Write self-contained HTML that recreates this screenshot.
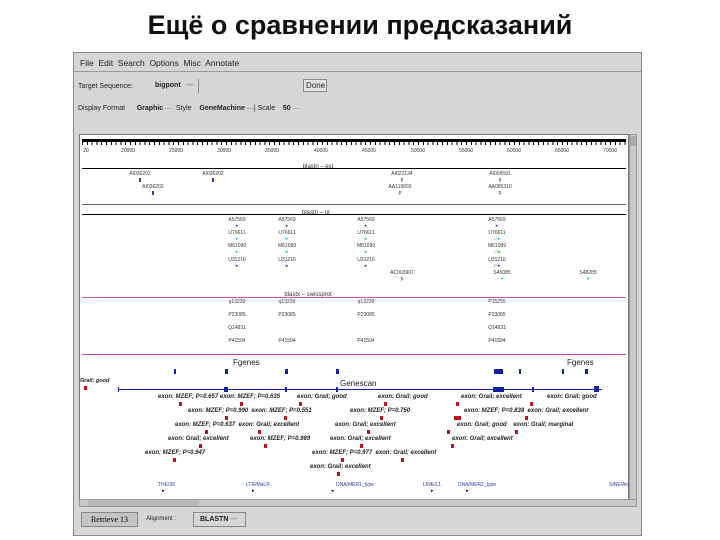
<!DOCTYPE html>
<html><head><meta charset="utf-8"><style>
*{margin:0;padding:0;box-sizing:border-box}
body{width:720px;height:540px;background:#fff;position:relative;overflow:hidden;font-family:"Liberation Sans",sans-serif}
.a{position:absolute;white-space:nowrap}
.t{position:absolute;white-space:nowrap;font-size:5px;color:#333;transform:translateX(-50%)}
.e{position:absolute;white-space:nowrap;font-size:6px;font-style:italic;font-weight:bold;color:#222}
.m{position:absolute;width:3px;height:4px;background:#c01020}
.b{position:absolute;width:2px;height:4px}
.l{position:absolute;height:1px}
.g{position:absolute;background:#1020a0}
.ui{font-size:7px;color:#222}
</style></head><body>
<div class="a" style="left:0;width:720px;top:10px;text-align:center;font-size:27px;font-weight:bold;color:#111">Ещё о сравнении предсказаний</div>

<div class="a" style="left:73px;top:52px;width:569px;height:484px;background:#d6d6d6;border:1px solid #888"></div>
<div class="a ui" style="left:74px;top:53px;width:567px;height:19px;border-bottom:1px solid #999;font-size:8.5px;padding:5px 0 0 6px">File&nbsp; Edit&nbsp; Search&nbsp; Options&nbsp; Misc&nbsp; Annotate</div>
<div class="a ui" style="left:78px;top:83px">Target Sequence:</div>
<div class="a ui" style="left:138px;top:79px;width:61px;height:14px;border-right:1px solid #888;font-weight:bold;padding:3px 0 0 17px">bigpont <span style="color:#888">&nbsp;&nbsp;—</span></div>
<div class="a ui" style="left:303px;top:79px;width:24px;height:13px;border:1px solid #888;background:#e4e4e4;font-size:8px;padding:1px 0 0 2px">Done</div>
<div class="a ui" style="left:78px;top:105px">Display Format&nbsp;&nbsp;&nbsp;&nbsp;&nbsp; <b>Graphic</b> <span style="color:#888">—</span>&nbsp; Style&nbsp;&nbsp;&nbsp; <b>GeneMachine</b> <span style="color:#888">—</span>| Scale&nbsp;&nbsp;&nbsp; <b>50</b> <span style="color:#888">—</span></div>

<div class="a" style="left:79px;top:134px;width:550px;height:366px;background:#fff;border:1px solid #777"></div>
<div class="a" style="left:629px;top:134px;width:8px;height:366px;background:#c8c8c8;border:1px solid #999"></div>
<div class="a" style="left:630px;top:136px;width:6px;height:10px;background:#aaa"></div>
<div class="a" style="left:79px;top:499px;width:558px;height:8px;background:#c8c8c8;border:1px solid #999"></div>
<div class="a" style="left:88px;top:500px;width:110px;height:6px;background:#b8b8b8"></div>

<div class="a" style="left:82px;top:139px;width:544px;height:3px;background:#000"></div>
<div class="a" style="left:82px;top:142px;width:544px;height:3px;background:repeating-linear-gradient(90deg,#000 0 1px,transparent 1px 4.8px)"></div>
<div class="t" style="left:86px;top:148px">20</div><div class="t" style="left:128px;top:148px">20000</div><div class="t" style="left:176px;top:148px">25000</div><div class="t" style="left:224px;top:148px">30000</div><div class="t" style="left:272px;top:148px">35000</div><div class="t" style="left:321px;top:148px">40000</div><div class="t" style="left:369px;top:148px">45000</div><div class="t" style="left:418px;top:148px">50000</div><div class="t" style="left:466px;top:148px">55000</div><div class="t" style="left:514px;top:148px">60000</div><div class="t" style="left:562px;top:148px">65000</div><div class="t" style="left:610px;top:148px">70000</div>

<div class="l" style="left:82px;top:168px;width:544px;background:#000"></div>
<div class="t" style="left:318px;top:164px;font-size:6px">blastn – est</div>
<div class="t" style="left:140px;top:171px">AI036202</div><div class="b" style="left:139px;top:178px;background:#3040a0"></div>
<div class="t" style="left:213px;top:171px">AI036202</div><div class="b" style="left:212px;top:178px;background:#3040a0"></div>
<div class="t" style="left:153px;top:184px">AI036202</div><div class="b" style="left:152px;top:191px;background:#3040a0"></div>
<div class="t" style="left:402px;top:171px">AI022134</div><div class="t" style="left:402px;top:177px">p</div>
<div class="t" style="left:400px;top:184px">AA119602</div><div class="t" style="left:400px;top:190px">p</div>
<div class="t" style="left:500px;top:171px">AI006591</div><div class="t" style="left:500px;top:177px">p</div>
<div class="t" style="left:500px;top:184px">AA065310</div><div class="t" style="left:500px;top:190px">p</div>
<div class="l" style="left:82px;top:204px;width:544px;background:#666"></div>
<div class="l" style="left:82px;top:214px;width:544px;background:#000"></div>
<div class="t" style="left:316px;top:210px;font-size:6px">blastn – nr</div>

<div class="t" style="left:237px;top:217px">A57569</div><div class="t" style="left:287px;top:217px">A57569</div><div class="t" style="left:366px;top:217px">A57569</div><div class="t" style="left:497px;top:217px">A57569</div>
<div class="t" style="left:237px;top:223px;color:#3040a0">▸</div><div class="t" style="left:287px;top:223px;color:#3040a0">▸</div><div class="t" style="left:366px;top:223px;color:#3040a0">▸</div><div class="t" style="left:497px;top:223px;color:#3040a0">▸</div>
<div class="t" style="left:237px;top:230px">U76611</div><div class="t" style="left:287px;top:230px">U76611</div><div class="t" style="left:366px;top:230px">U76611</div><div class="t" style="left:497px;top:230px">U76611</div>
<div class="t" style="left:237px;top:236px;color:#20b0d0">▸</div><div class="t" style="left:287px;top:236px;color:#20b0d0">▸</div><div class="t" style="left:366px;top:236px;color:#20b0d0">▸</div><div class="t" style="left:497px;top:236px;color:#20b0d0">▭▸</div>
<div class="t" style="left:237px;top:243px">M61099</div><div class="t" style="left:287px;top:243px">M61099</div><div class="t" style="left:366px;top:243px">M61099</div><div class="t" style="left:497px;top:243px">M61099</div>
<div class="t" style="left:237px;top:249px;color:#20c040">▸</div><div class="t" style="left:287px;top:249px;color:#20c040">▸</div><div class="t" style="left:366px;top:249px;color:#20c040">▸</div><div class="t" style="left:497px;top:249px;color:#20c040">▭▸</div>
<div class="t" style="left:237px;top:257px">U31216</div><div class="t" style="left:287px;top:257px">U31216</div><div class="t" style="left:366px;top:257px">U31216</div><div class="t" style="left:497px;top:257px">U31216</div>
<div class="t" style="left:237px;top:263px;color:#3040a0">▸</div><div class="t" style="left:287px;top:263px;color:#3040a0">▸</div><div class="t" style="left:366px;top:263px;color:#3040a0">▸</div><div class="t" style="left:497px;top:263px;color:#3040a0">▭▸</div>
<div class="t" style="left:402px;top:270px">AC003907</div><div class="t" style="left:402px;top:276px">p</div>
<div class="t" style="left:502px;top:270px">S45085</div><div class="t" style="left:502px;top:276px;color:#20b0d0">▾</div>
<div class="t" style="left:588px;top:270px">S48285</div><div class="t" style="left:588px;top:276px;color:#20b0d0">▾</div>

<div class="l" style="left:82px;top:297px;width:544px;background:#d050d0"></div>
<div class="t" style="left:308px;top:292px;font-size:6px">blastx – swissprot</div>
<div class="t" style="left:237px;top:299px">q13239</div><div class="t" style="left:287px;top:299px">q13239</div><div class="t" style="left:366px;top:299px">q13239</div><div class="t" style="left:497px;top:299px">P15255</div>
<div class="t" style="left:237px;top:312px">P23085</div><div class="t" style="left:287px;top:312px">P23085</div><div class="t" style="left:366px;top:312px">P23085</div><div class="t" style="left:497px;top:312px">P23085</div>
<div class="t" style="left:237px;top:325px">Q14831</div><div class="t" style="left:497px;top:325px">Q14831</div>
<div class="t" style="left:237px;top:338px">P41594</div><div class="t" style="left:287px;top:338px">P41594</div><div class="t" style="left:366px;top:338px">P41594</div><div class="t" style="left:497px;top:338px">P41594</div>
<div class="l" style="left:82px;top:354px;width:544px;background:#c040c0"></div>

<div class="a" style="left:233px;top:358px;font-size:8px;color:#222">Fgenes</div>
<div class="a" style="left:567px;top:358px;font-size:8px;color:#222">Fgenes</div>
<div class="g" style="left:174px;top:369px;width:2px;height:5px"></div><div class="g" style="left:225px;top:369px;width:3px;height:5px"></div><div class="g" style="left:285px;top:369px;width:3px;height:5px"></div><div class="g" style="left:336px;top:369px;width:3px;height:5px"></div><div class="g" style="left:494px;top:369px;width:9px;height:5px"></div><div class="g" style="left:519px;top:369px;width:2px;height:5px"></div><div class="g" style="left:562px;top:369px;width:2px;height:5px"></div><div class="g" style="left:585px;top:369px;width:3px;height:5px"></div>
<div class="e" style="left:80px;top:378px;font-size:5.5px">Grail; good</div>
<div class="m" style="left:84px;top:386px"></div>
<div class="a" style="left:340px;top:379px;font-size:8px;color:#222">Genescan</div>
<div class="g" style="left:118px;top:389px;width:484px;height:1px"></div>
<div class="g" style="left:118px;top:387px;width:1px;height:5px"></div>
<div class="g" style="left:224px;top:387px;width:4px;height:5px"></div><div class="g" style="left:285px;top:387px;width:2px;height:5px"></div><div class="g" style="left:336px;top:387px;width:2px;height:5px"></div><div class="g" style="left:493px;top:387px;width:11px;height:5px"></div><div class="g" style="left:532px;top:387px;width:2px;height:5px"></div><div class="g" style="left:594px;top:386px;width:5px;height:6px"></div>

<div class="e" style="left:158px;top:394px">exon: MZEF; P=0.657 exon: MZEF; P=0.635</div>
<div class="e" style="left:297px;top:394px">exon: Grail; good</div>
<div class="e" style="left:378px;top:394px">exon: Grail; good</div>
<div class="e" style="left:461px;top:394px">exon: Grail; excellent</div>
<div class="e" style="left:547px;top:394px">exon: Grail; good</div>
<div class="m" style="left:179px;top:402px"></div><div class="m" style="left:240px;top:402px"></div><div class="m" style="left:299px;top:402px"></div><div class="m" style="left:384px;top:402px"></div><div class="m" style="left:456px;top:402px"></div><div class="m" style="left:530px;top:402px"></div>
<div class="e" style="left:188px;top:408px">exon: MZEF; P=0.990&nbsp; exon: MZEF; P=0.551</div>
<div class="e" style="left:350px;top:408px">exon: MZEF; P=0.750</div>
<div class="e" style="left:464px;top:408px">exon: MZEF; P=0.838&nbsp; exon: Grail; excellent</div>
<div class="m" style="left:225px;top:416px"></div><div class="m" style="left:284px;top:416px"></div><div class="m" style="left:380px;top:416px"></div><div class="m" style="left:454px;top:416px;width:7px"></div><div class="m" style="left:525px;top:416px"></div>
<div class="e" style="left:175px;top:422px">exon: MZEF; P=0.637&nbsp; exon: Grail; excellent</div>
<div class="e" style="left:335px;top:422px">exon: Grail; excellent</div>
<div class="e" style="left:457px;top:422px">exon: Grail; good&nbsp;&nbsp;&nbsp; exon: Grail; marginal</div>
<div class="m" style="left:205px;top:430px"></div><div class="m" style="left:258px;top:430px"></div><div class="m" style="left:367px;top:430px"></div><div class="m" style="left:447px;top:430px"></div><div class="m" style="left:515px;top:430px"></div>
<div class="e" style="left:168px;top:436px">exon: Grail; excellent</div>
<div class="e" style="left:250px;top:436px">exon: MZEF; P=0.989</div>
<div class="e" style="left:330px;top:436px">exon: Grail; excellent</div>
<div class="e" style="left:452px;top:436px">exon: Grail; excellent</div>
<div class="m" style="left:199px;top:444px"></div><div class="m" style="left:264px;top:444px"></div><div class="m" style="left:360px;top:444px"></div><div class="m" style="left:451px;top:444px"></div>
<div class="e" style="left:145px;top:450px">exon: MZEF; P=0.947</div>
<div class="e" style="left:312px;top:450px">exon: MZEF; P=0.977&nbsp; exon: Grail; excellent</div>
<div class="m" style="left:173px;top:458px"></div><div class="m" style="left:341px;top:458px"></div><div class="m" style="left:401px;top:458px"></div>
<div class="e" style="left:310px;top:464px">exon: Grail; excellent</div>
<div class="m" style="left:337px;top:472px"></div>

<div class="a" style="left:158px;top:482px;font-size:5px;color:#3040a0">THE/38</div>
<div class="a" style="left:246px;top:482px;font-size:5px;color:#3040a0">LTR/MaLR</div>
<div class="a" style="left:336px;top:482px;font-size:5px;color:#3040a0">DNA/MER1_type</div>
<div class="a" style="left:423px;top:482px;font-size:5px;color:#3040a0">LINE/L1</div>
<div class="a" style="left:458px;top:482px;font-size:5px;color:#3040a0">DNA/MER2_type</div>
<div class="a" style="left:609px;top:482px;font-size:5px;color:#3040a0">SINE/Alu</div>
<div class="a" style="left:162px;top:488px;font-size:5px">▸</div><div class="a" style="left:252px;top:488px;font-size:5px">▸</div><div class="a" style="left:331px;top:488px;font-size:5px">◂</div><div class="a" style="left:431px;top:488px;font-size:5px">▸</div><div class="a" style="left:466px;top:488px;font-size:5px">▸</div>

<div class="a" style="left:81px;top:512px;width:57px;height:15px;background:#c4c4c4;border:1px solid #888;font-size:8px;text-align:center;padding-top:2px;font-family:'Liberation Serif',serif">Retrieve 13</div>
<div class="a ui" style="left:146px;top:516px;font-size:6px">Alignment :</div>
<div class="a ui" style="left:193px;top:512px;width:53px;height:15px;border:1px solid #888;font-weight:bold;padding:3px 0 0 6px">BLASTN <span style="color:#888">—</span></div>
</body></html>
